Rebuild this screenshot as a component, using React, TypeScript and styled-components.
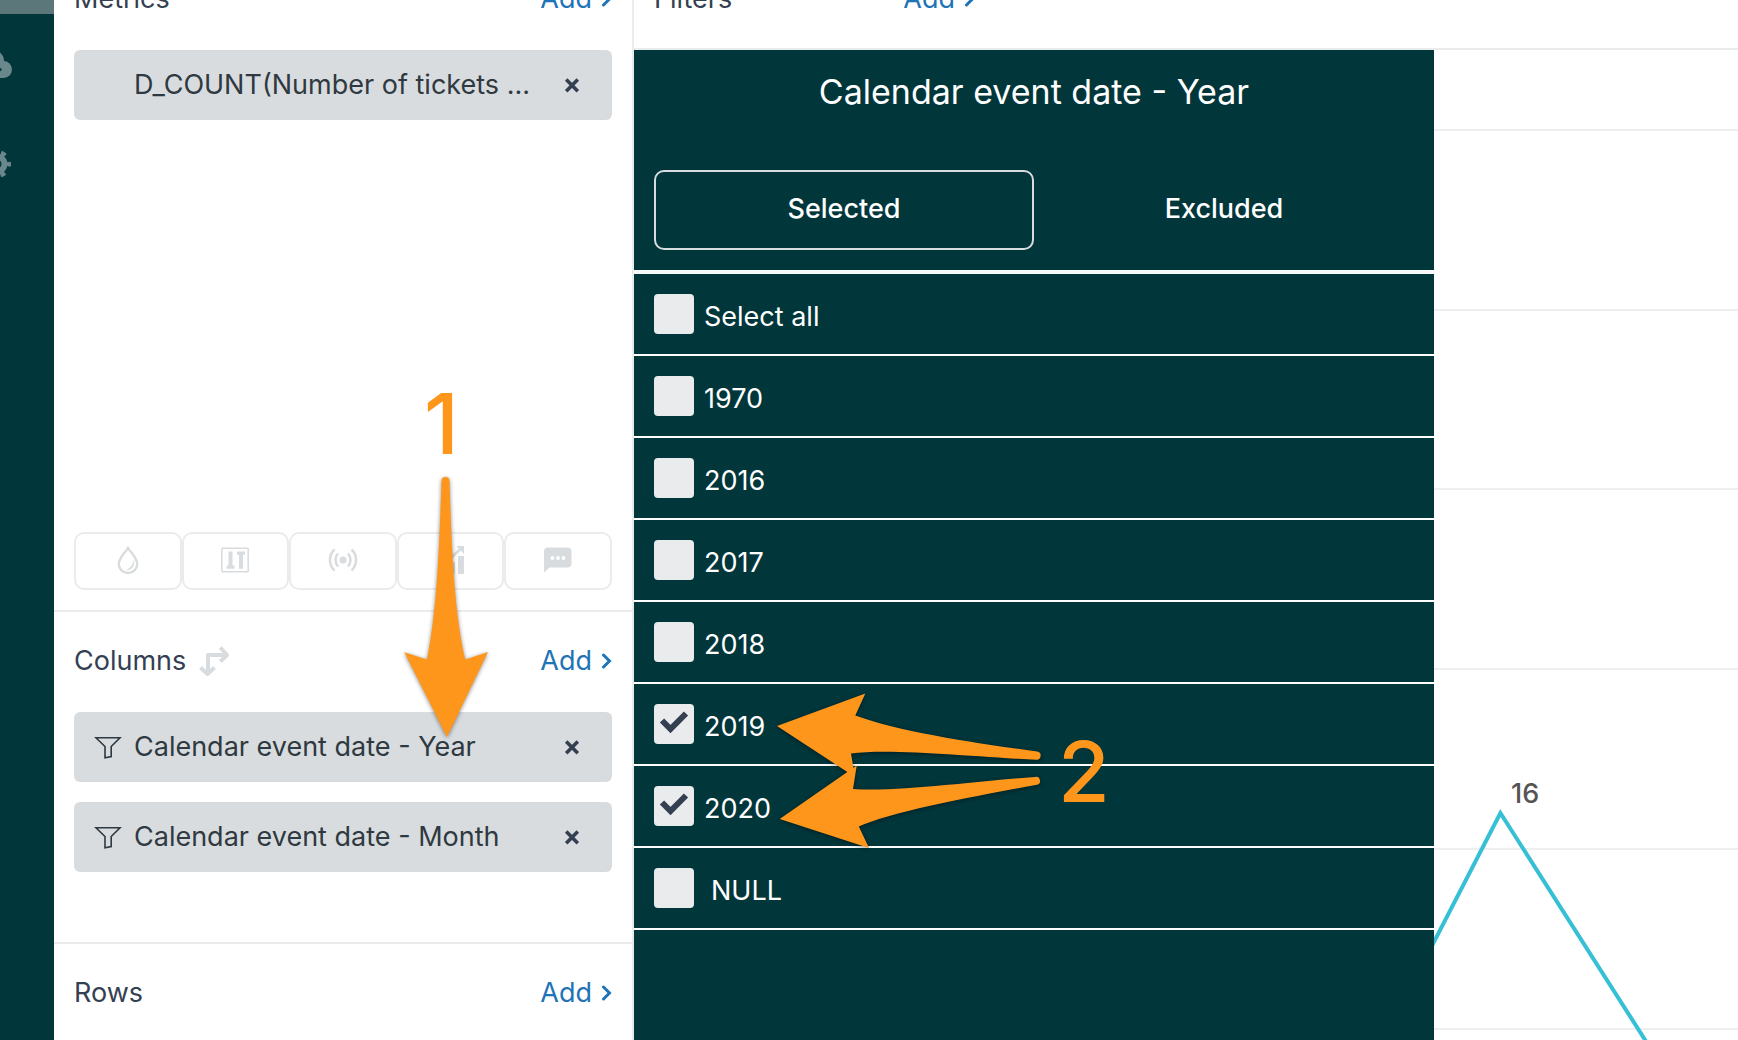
import React, { useState } from "react";
import styled, { createGlobalStyle } from "styled-components";

const color = {
  kale: "#01363b",
  kaleMuted: "#5b777a",
  line: "#e9ebed",
  chip: "#d8dcde",
  ink: "#2f3941",
  heading: "#343f52",
  link: "#1f73b7",
  accent: "#ff961c",
};

const GlobalStyle = createGlobalStyle`
  *, *::before, *::after { box-sizing: border-box; }
  body {
    margin: 0;
    background: #fff;
    overflow: hidden;
    font-family: Inter, "Liberation Sans", sans-serif;
    font-size: 27px;
    line-height: 32px;
    color: ${color.ink};
  }
  button { font: inherit; color: inherit; background: none; border: 0; padding: 0; cursor: pointer; }
  h1, h2, ul { margin: 0; padding: 0; font: inherit; }
  ul { list-style: none; }
  svg { display: block; }
`;

const Page = styled.div`
  position: relative;
  display: flex;
  height: 100vh;
  overflow: hidden;
`;

const Rail = styled.nav`
  flex: 0 0 54px;
  display: flex;
  flex-direction: column;
  background: ${color.kale};
  color: #6a888b;
  overflow: hidden;
`;

const RailTop = styled.div`
  height: 14px;
  margin-bottom: 34px;
  background: ${color.kaleMuted};
`;

const RailButton = styled.button`
  width: 52px;
  height: 32px;
  margin: 0 0 68px -40px;
  &:last-child { margin-bottom: 0; }
`;

/* The workspace is scrolled so that only the lower half of the first headers is visible. */
const Scrolled = styled.main`
  flex: 1;
  display: flex;
  min-width: 0;
  margin-top: -50px;
`;

const Fields = styled.div`
  flex: 0 0 580px;
  display: flex;
  flex-direction: column;
  border-right: 2px solid ${color.line};
`;

const Section = styled.section`
  display: flex;
  flex-direction: column;
  padding: 0 20px;
  &:not(:last-child) { border-bottom: 2px solid ${color.line}; }
`;

const SectionHead = styled.div`
  display: flex;
  align-items: center;
  gap: 12px;
  height: 100px;
  padding-bottom: 2px;
`;

const Heading = styled.h2`
  color: ${color.heading};
`;

const AddButton = styled.button`
  display: flex;
  align-items: center;
  gap: 9px;
  margin-left: auto;
  color: ${color.link};
`;

const ChipList = styled.ul<{ $tail: number }>`
  display: flex;
  flex-direction: column;
  gap: 20px;
  padding-bottom: ${(p) => p.$tail}px;
`;

const ChipBox = styled.li`
  display: flex;
  align-items: center;
  height: 70px;
  padding: 0 32px 0 20px;
  border-radius: 6px;
  background: ${color.chip};
`;

const ChipIcon = styled.span`
  flex: 0 0 40px;
`;

const ChipText = styled.span`
  flex: 1;
  white-space: nowrap;
`;

const Tools = styled.div`
  display: flex;
  padding-bottom: 20px;
`;

const Tool = styled.button`
  flex: 1;
  display: flex;
  align-items: center;
  justify-content: center;
  height: 58px;
  padding-bottom: 2px;
  border: 2px solid ${color.line};
  border-radius: 10px;
  color: ${color.chip};
`;

const Results = styled.div`
  flex: 1;
  display: flex;
  flex-direction: column;
  min-width: 0;
`;

const FilterBar = styled.div`
  height: 100px;
  border-bottom: 2px solid ${color.line};
`;

const FilterHead = styled(SectionHead)`
  width: 321px;
  margin: 0 20px;
`;

const Stage = styled.div`
  flex: 1;
  display: flex;
  min-height: 0;
`;

const Picker = styled.section`
  flex: 0 0 800px;
  background: ${color.kale};
  color: #fff;
`;

const PickerTitle = styled.h1`
  padding: 22px 20px 58px;
  font-size: 34px;
  line-height: 40px;
  text-align: center;
`;

const Tabs = styled.div`
  display: grid;
  grid-template-columns: 1fr 1fr;
  padding: 0 20px 20px;
  border-bottom: 4px solid #f8f9f9;
`;

const Tab = styled.button`
  height: 80px;
  padding-bottom: 2px;
  border: 2px solid transparent;
  border-radius: 10px;
  font-weight: 500;
  &[aria-selected="true"] { border-color: ${color.chip}; }
`;

const Option = styled.label`
  display: flex;
  align-items: center;
  gap: 10px;
  height: 82px;
  padding: 0 20px;
  border-bottom: 2px solid #fff;
  cursor: pointer;
`;

const Box = styled.span`
  display: grid;
  color: ${color.heading};
  & > * { grid-area: 1 / 1; }
`;

const Check = styled.input`
  appearance: none;
  width: 40px;
  height: 40px;
  margin: 0;
  border-radius: 4px;
  background: ${color.line};
  & + svg { visibility: hidden; pointer-events: none; }
  &:checked + svg { visibility: visible; }
`;

const OptionText = styled.span<{ $indent?: boolean }>`
  padding: 6px 0 0 ${(p) => (p.$indent ? 7 : 0)}px;
`;

const Chart = styled.div`
  flex: 1;
  min-width: 0;
  overflow: hidden;
`;

const Marks = styled.svg`
  position: absolute;
  left: 0;
  top: 0;
  pointer-events: none;
  fill: ${color.accent};
  filter: drop-shadow(0 1px 2px rgba(0, 0, 0, 0.45));
`;

const StepNumber = styled.span<{ $x: number; $y: number }>`
  position: absolute;
  left: ${(p) => p.$x}px;
  top: ${(p) => p.$y}px;
  color: ${color.accent};
  font-size: 84px;
  line-height: 84px;
  font-weight: 500;
  pointer-events: none;
`;

const Chevron = () => (
  <svg width="11" height="16" viewBox="0 0 11 16" fill="none" stroke="currentColor" strokeWidth="3" strokeLinecap="round">
    <path d="M2.500 2l6 6-6 6" />
  </svg>
);

const Add = () => (
  <AddButton type="button">
    Add <Chevron />
  </AddButton>
);

const Funnel = () => (
  <svg width="28" height="24" viewBox="0 0 28 24" fill="none" stroke={color.ink} strokeWidth="1.6">
    <path d="M2 2.7h24l-8.8 8.8v10L11 22.8V11.5z" />
  </svg>
);

const Cross = () => (
  <svg width="16" height="16" viewBox="0 0 16 16" stroke={color.heading} strokeWidth="3.6">
    <path d="M2.2 2.6l11.6 11.6M13.800 2.600L2.200 14.200" />
  </svg>
);

const Swap = () => (
  <svg width="32" height="32" viewBox="0 0 32 32" fill="none" stroke={color.chip} strokeWidth="4" strokeLinejoin="round">
    <path d="M10 29V10h19M22.300 2.500L29 10l-6.700 6.500M2.500 22.500L9.500 29l7-6.500" />
  </svg>
);

function Chip({ label, filtered }: { label: string; filtered?: boolean }) {
  return (
    <ChipBox>
      <ChipIcon>{filtered && <Funnel />}</ChipIcon>
      <ChipText>{label}</ChipText>
      <button type="button" aria-label={`Remove ${label}`}>
        <Cross />
      </button>
    </ChipBox>
  );
}

const tools = [
  {
    name: "Color",
    art: (
      <g fill="none" stroke="currentColor" strokeWidth="2.4">
        <path d="M15 3C12 8 5.800 12.500 5.800 19.300a9.200 8.700 0 0 0 18.400 0C24.200 12.500 18 8 15 3z" />
        <path d="M13.500 25c5 0 8-3.500 7.200-9.500-.9 4.500-3 7.500-7.200 9.500z" fill="currentColor" strokeWidth=".5" />
      </g>
    ),
  },
  {
    name: "Text size",
    art: (
      <g fill="currentColor">
        <rect x="1.800" y="3.300" width="26.400" height="23.400" rx="1" fill="none" stroke="currentColor" strokeWidth="1.600" />
        <path d="M8.500 6.500h4v14h2v3.200H6.600v-3.200h1.900zM17 6.500h8v3.200h-2v14h-4v-14h-2z" />
      </g>
    ),
  },
  {
    name: "Signal",
    art: (
      <g fill="none" stroke="currentColor" strokeWidth="2.500">
        <circle cx="15" cy="15" r="3.500" fill="currentColor" stroke="none" />
        <path d="M10 8.500c-3.300 3.500-3.300 9.500 0 13M20 8.500c3.300 3.500 3.300 9.500 0 13" />
        <path d="M6.500 4.500c-6 5.500-6 15.500 0 21M23.500 4.500c6 5.500 6 15.500 0 21" />
      </g>
    ),
  },
  {
    name: "Trend",
    art: (
      <g fill="currentColor">
        <path d="M3 21h5v8H3zM13 17h6v12h-6zM22 11h6v18h-6z" />
        <path d="M20.500 1H28v8z" />
        <path d="M3 15l5-4 5 3.500L25 3.500" fill="none" stroke="currentColor" strokeWidth="3" />
      </g>
    ),
  },
  {
    name: "Comment",
    art: (
      <>
        <path d="M5 2.500h19.500q4 0 4 4v12q0 4-4 4H6.500L1 27.500v-21q0-4 4-4z" fill="currentColor" />
        <g fill="#fff">
          <circle cx="9.500" cy="13" r="1.900" />
          <circle cx="15" cy="13" r="1.900" />
          <circle cx="20.500" cy="13" r="1.900" />
        </g>
      </>
    ),
  },
];

const options = ["Select all", "1970", "2016", "2017", "2018", "2019", "2020", "NULL"];
const gridLines = [80, 260, 439, 619, 799, 979];

export default function App() {
  const [checked, setChecked] = useState<string[]>(["2019", "2020"]);
  const [tab, setTab] = useState("Selected");

  const toggle = (name: string) =>
    setChecked((now) => (now.includes(name) ? now.filter((n) => n !== name) : [...now, name]));

  return (
    <>
      <GlobalStyle />
      <Page>
        <Rail>
          <RailTop />
          <RailButton type="button" aria-label="Datasets">
            <svg width="52" height="32" viewBox="0 0 52 32" fill="currentColor">
              <circle cx="33" cy="13" r="11" />
              <circle cx="43.500" cy="21.500" r="8.500" />
              <path d="M20 14h23v16H20z" />
              <path d="M39 18.500l3 3-3 3z" fill={color.kale} />
            </svg>
          </RailButton>
          <RailButton type="button" aria-label="Settings">
            <svg width="52" height="32" viewBox="0 0 52 32" fill="none" stroke="currentColor">
              <circle cx="37" cy="16" r="7.500" strokeWidth="6" />
              <circle cx="37" cy="16" r="12" strokeWidth="4" strokeDasharray="5 7.566" strokeDashoffset="2.500" />
            </svg>
          </RailButton>
        </Rail>

        <Scrolled>
          <Fields>
            <Section>
              <SectionHead>
                <Heading>Metrics</Heading>
                <Add />
              </SectionHead>
              <ChipList $tail={412}>
                <Chip label="D_COUNT(Number of tickets ..." />
              </ChipList>
              <Tools>
                {tools.map((t) => (
                  <Tool key={t.name} type="button" aria-label={t.name}>
                    <svg width="30" height="30" viewBox="0 0 30 30">
                      {t.art}
                    </svg>
                  </Tool>
                ))}
              </Tools>
            </Section>
            <Section>
              <SectionHead>
                <Heading>Columns</Heading>
                <Swap />
                <Add />
              </SectionHead>
              <ChipList $tail={70}>
                <Chip label="Calendar event date - Year" filtered />
                <Chip label="Calendar event date - Month" filtered />
              </ChipList>
            </Section>
            <Section>
              <SectionHead>
                <Heading>Rows</Heading>
                <Add />
              </SectionHead>
            </Section>
          </Fields>

          <Results>
            <FilterBar>
              <FilterHead>
                <Heading>Filters</Heading>
                <Add />
              </FilterHead>
            </FilterBar>
            <Stage>
              <Picker>
                <PickerTitle>Calendar event date - Year</PickerTitle>
                <Tabs role="tablist">
                  {["Selected", "Excluded"].map((name) => (
                    <Tab key={name} type="button" role="tab" aria-selected={tab === name} onClick={() => setTab(name)}>
                      {name}
                    </Tab>
                  ))}
                </Tabs>
                {options.map((name) => (
                  <Option key={name}>
                    <Box>
                      <Check type="checkbox" checked={checked.includes(name)} onChange={() => toggle(name)} />
                      <svg width="40" height="40" viewBox="0 0 40 40" fill="none" stroke="currentColor" strokeWidth="6">
                        <path d="M8 16.500l8.500 8.500L32 9.500" />
                      </svg>
                    </Box>
                    <OptionText $indent={name === "NULL"}>{name}</OptionText>
                  </Option>
                ))}
              </Picker>
              <Chart>
                <svg width="100%" height="100%">
                  {gridLines.map((y) => (
                    <line key={y} x1="0" x2="100%" y1={y} y2={y} stroke="#eeeeee" strokeWidth="2" />
                  ))}
                  <path d="M-34 958L66.400 763L229 1018" fill="none" stroke="#37c0d5" strokeWidth="4" />
                  <text x="77" y="753" fontSize="27" fontWeight="500" fill="#555555">
                    16
                  </text>
                </svg>
              </Chart>
            </Stage>
          </Results>
        </Scrolled>

        <Marks width="1738" height="1040">
          <path d="M441.500 481a4 4 0 0 1 8 0C452 560 455 615 465.300 659.500L488 652L447 737L404.300 652.300L427 659.500C436 615 439 560 441.500 481z" />
          <path d="M1037 751.500a4 4 0 0 1-1 8.200C975 757 890 748 851 753.500L855 777L777 726L865.300 693.500L855.300 715.500C900 732 975 743 1037 751.500z" />
          <path d="M1035 777a4 4 0 0 1 2 7.800C975 796 890 812 858.800 826.500L869 848L779.700 819L856.700 765.500L853 789C900 792 975 781 1035 777z" />
        </Marks>
        <StepNumber $x={424} $y={382}>1</StepNumber>
        <StepNumber $x={1058} $y={730}>2</StepNumber>
      </Page>
    </>
  );
}
